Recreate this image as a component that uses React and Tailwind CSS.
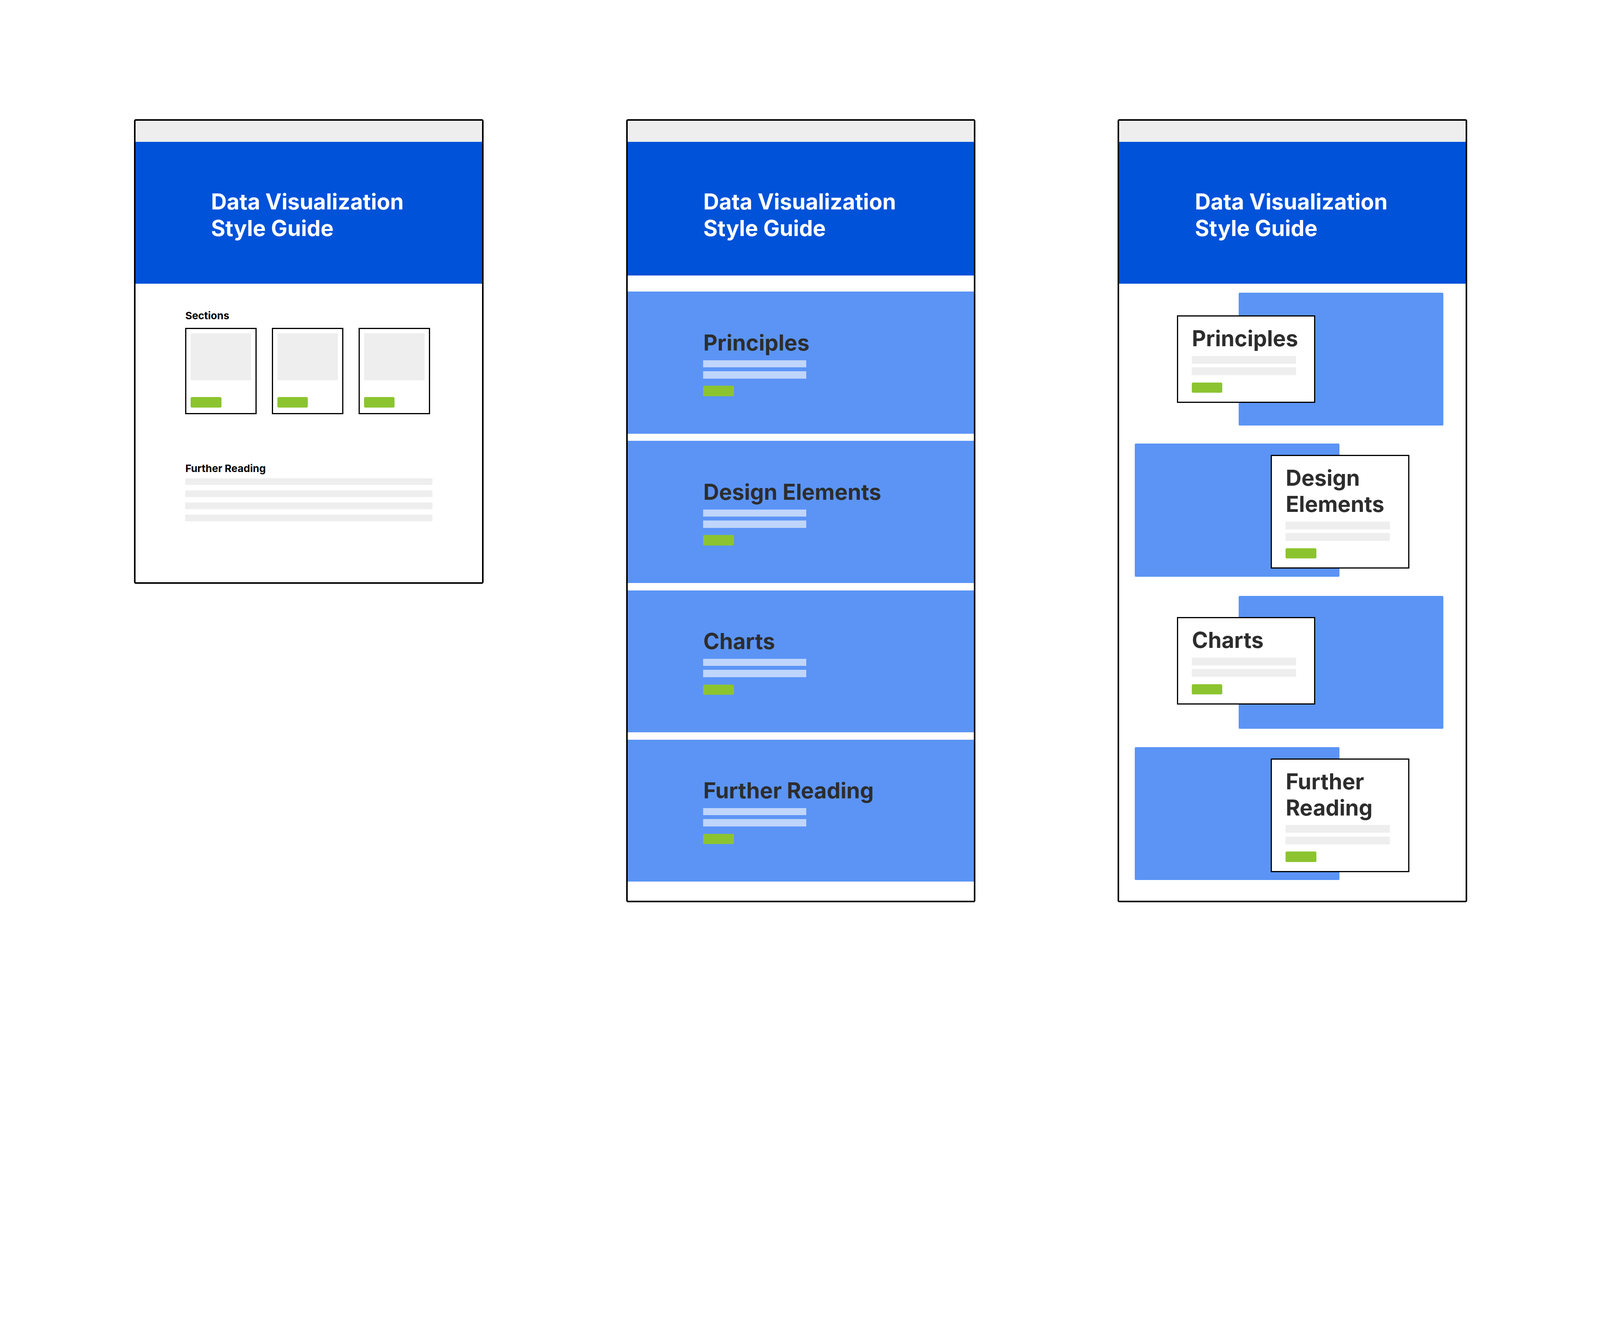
const F = { fontFamily: "Inter, 'Noto Sans', sans-serif" };

function Title({ h }) {
  return (
    <div className={`bg-[#0052d9] ${h} pl-[250px] pt-[154px]`}>
      <div className="text-white font-bold text-[72px] leading-[88px]">
        Data Visualization<br />Style Guide
      </div>
    </div>
  );
}

function Green() {
  return <div className="w-[101px] h-[34px] rounded-[5px] bg-[#8cc430]" />;
}

function Frame1() {
  return (
    <div className="w-[1156px] h-[1534px] border-[6px] border-black rounded-[6px] overflow-hidden bg-white">
      <div className="h-[69px] bg-[#eeeeee]" />
      <Title h="h-[468px]" />
      <div className="pl-[165px] pt-[83px]">
        <div className="text-[34px] leading-[44px] font-bold text-black">Sections</div>
        <div className="flex gap-[50px] mt-[20px]">
          {[0, 1, 2].map((i) => (
            <div key={i} className="w-[236px] h-[284px] border-[4px] border-black p-[14px] flex flex-col justify-between bg-white">
              <div className="h-[155px] bg-[#eeeeee]" />
              <div className="mb-[4px]"><Green /></div>
            </div>
          ))}
        </div>
        <div className="text-[34px] leading-[44px] font-bold text-black mt-[157px]">Further Reading</div>
        <div className="flex flex-col gap-[18px] mt-[11px]">
          {[0, 1, 2, 3].map((i) => (
            <div key={i} className="w-[816px] h-[22px] bg-[#eeeeee]" />
          ))}
        </div>
      </div>
    </div>
  );
}

function Frame2() {
  const s = ["Principles", "Design Elements", "Charts", "Further Reading"];
  return (
    <div className="w-[1154px] h-[2586px] border-[6px] border-black rounded-[6px] overflow-hidden bg-white">
      <div className="h-[69px] bg-[#eeeeee]" />
      <Title h="h-[441px]" />
      <div className="flex flex-col gap-[24px] mt-[54px]">
        {s.map((t) => (
          <div key={t} className="h-[469px] bg-[#5b94f5] pl-[250px] pt-[126px]">
            <div className="text-[72px] leading-[86px] font-bold text-[#2d2d2d]">{t}</div>
            <div className="w-[340px] h-[24px] bg-[#bfd5fb] mt-[14px]" />
            <div className="w-[340px] h-[24px] bg-[#bfd5fb] mt-[13px]" />
            <div className="mt-[24px]"><Green /></div>
          </div>
        ))}
      </div>
    </div>
  );
}

function Card({ t, cls }) {
  return (
    <div className={`absolute w-[458px] bg-white border-[4px] border-black px-[46px] pt-[30px] pb-[30px] ${cls}`}>
      <div className="text-[72px] leading-[86px] font-bold text-[#2d2d2d]">{t}</div>
      <div className="w-[344px] h-[26px] bg-[#eeeeee] mt-[14px]" />
      <div className="w-[344px] h-[26px] bg-[#eeeeee] mt-[12px]" />
      <div className="mt-[24px]"><Green /></div>
    </div>
  );
}

function Frame3() {
  const rows = [
    { t: "Principles", ml: "ml-[395px]", card: "top-[75px] left-[-205px]", mt: "mt-[30px]" },
    { t: "Design Elements", ml: "ml-[51px]", card: "top-[37px] left-[449px]", mt: "mt-[60px]" },
    { t: "Charts", ml: "ml-[395px]", card: "top-[70px] left-[-205px]", mt: "mt-[63px]" },
    { t: "Further Reading", ml: "ml-[51px]", card: "top-[37px] left-[449px]", mt: "mt-[61px]" },
  ];
  return (
    <div className="w-[1154px] h-[2586px] border-[6px] border-black rounded-[6px] overflow-hidden bg-white">
      <div className="h-[69px] bg-[#eeeeee]" />
      <Title h="h-[468px]" />
      {rows.map((r) => (
        <div key={r.t} className={`relative w-[676px] h-[439px] bg-[#5b94f5] rounded-[4px] ${r.ml} ${r.mt}`}>
          <Card t={r.t} cls={r.card} />
        </div>
      ))}
    </div>
  );
}

export default function App() {
  return (
    <div style={F} className="w-full min-h-screen bg-white overflow-hidden">
      <div className="[zoom:0.775] flex items-start gap-[470px] pl-[442px] pt-[394px]">
        <Frame1 />
        <Frame2 />
        <Frame3 />
      </div>
    </div>
  );
}
